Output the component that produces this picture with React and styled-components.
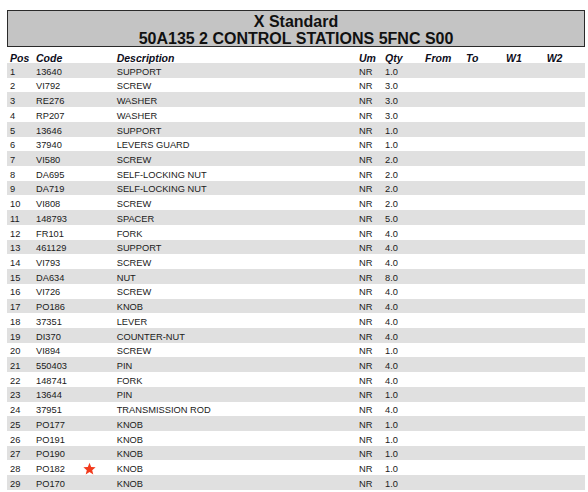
import styled, { createGlobalStyle } from 'styled-components';

const GlobalStyle = createGlobalStyle`
  html, body {
    margin: 0;
    padding: 0;
    background: #fff;
  }

  body {
    font-family: "Liberation Sans", Arial, sans-serif;
    color: #1a1a1a;
  }
`;

const Page = styled.div`
  width: 578px;
  padding: 10px 0 0 7px;
`;

const TitleBox = styled.header`
  box-sizing: border-box;
  height: 37px;
  padding-top: 3.2px;
  background: #c4c4c4;
  border: 1.5px solid #2a2a2a;

  h1 {
    margin: 0;
    font-size: 16px;
    line-height: 16.5px;
    font-weight: bold;
    color: #111;
    text-align: center;
    white-space: nowrap;
  }
`;

const COLS = '26px 80.7px 242.3px 26px 40px 41px 40px 40.7px 1fr';

const HeadRow = styled.div`
  box-sizing: border-box;
  display: grid;
  grid-template-columns: ${COLS};
  height: 16px;
  padding: 5px 0 0 3px;
  align-items: start;
  font-size: 10.5px;
  line-height: 12px;
  font-weight: bold;
  font-style: italic;
  color: #0d0d1a;
`;

const Row = styled.div`
  box-sizing: border-box;
  display: grid;
  grid-template-columns: ${COLS};
  height: 14.72px;
  padding: 2.6px 0 0 3px;
  align-items: center;
  font-size: 9.3px;
  background: ${(p) => (p.$shaded ? '#e0e0e0' : '#fff')};
`;

const Cell = styled.span`
  white-space: nowrap;
  display: flex;
  align-items: center;
`;

const Star = styled.svg`
  width: 13px;
  height: 13px;
  margin: -2px 0 0 18px;
  fill: #f23a1c;
`;

const items = [
  ['1', '13640', 'SUPPORT', '1.0'],
  ['2', 'VI792', 'SCREW', '3.0'],
  ['3', 'RE276', 'WASHER', '3.0'],
  ['4', 'RP207', 'WASHER', '3.0'],
  ['5', '13646', 'SUPPORT', '1.0'],
  ['6', '37940', 'LEVERS GUARD', '1.0'],
  ['7', 'VI580', 'SCREW', '2.0'],
  ['8', 'DA695', 'SELF-LOCKING NUT', '2.0'],
  ['9', 'DA719', 'SELF-LOCKING NUT', '2.0'],
  ['10', 'VI808', 'SCREW', '2.0'],
  ['11', '148793', 'SPACER', '5.0'],
  ['12', 'FR101', 'FORK', '4.0'],
  ['13', '461129', 'SUPPORT', '4.0'],
  ['14', 'VI793', 'SCREW', '4.0'],
  ['15', 'DA634', 'NUT', '8.0'],
  ['16', 'VI726', 'SCREW', '4.0'],
  ['17', 'PO186', 'KNOB', '4.0'],
  ['18', '37351', 'LEVER', '4.0'],
  ['19', 'DI370', 'COUNTER-NUT', '4.0'],
  ['20', 'VI894', 'SCREW', '1.0'],
  ['21', '550403', 'PIN', '4.0'],
  ['22', '148741', 'FORK', '4.0'],
  ['23', '13644', 'PIN', '1.0'],
  ['24', '37951', 'TRANSMISSION ROD', '4.0'],
  ['25', 'PO177', 'KNOB', '1.0'],
  ['26', 'PO191', 'KNOB', '1.0'],
  ['27', 'PO190', 'KNOB', '1.0'],
  ['28', 'PO182', 'KNOB', '1.0', true],
  ['29', 'PO170', 'KNOB', '1.0'],
];

const headers = ['Pos', 'Code', 'Description', 'Um', 'Qty', 'From', 'To', 'W1', 'W2'];

const App = () => (
  <Page>
    <GlobalStyle />
    <TitleBox>
      <h1>X Standard</h1>
      <h1>50A135 2 CONTROL STATIONS 5FNC S00</h1>
    </TitleBox>

    <HeadRow>
      {headers.map((h) => (
        <Cell key={h}>{h}</Cell>
      ))}
    </HeadRow>

    {items.map(([pos, code, desc, qty, marked], i) => (
      <Row key={pos} $shaded={i % 2 === 0}>
        <Cell>{pos}</Cell>
        <Cell>
          {code}
          {marked && (
            <Star viewBox="0 0 24 24">
              <path d="M12 1.5l3.1 7.6 8.2.6-6.3 5.3 2 8-7-4.4-7 4.4 2-8L.7 9.7l8.2-.6z" />
            </Star>
          )}
        </Cell>
        <Cell>{desc}</Cell>
        <Cell>NR</Cell>
        <Cell>{qty}</Cell>
        <Cell />
        <Cell />
        <Cell />
        <Cell />
      </Row>
    ))}
  </Page>
);

export default App;
